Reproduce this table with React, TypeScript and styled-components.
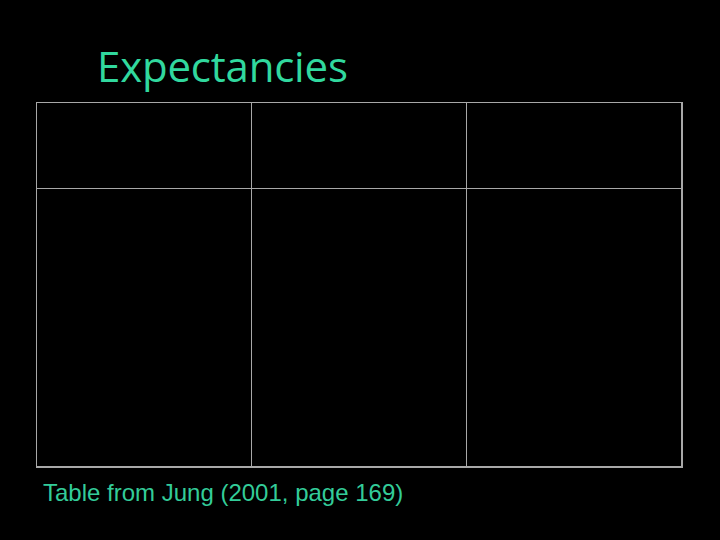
import React from "react";
import styled, { createGlobalStyle } from "styled-components";

const Global = createGlobalStyle`
  html, body { margin: 0; padding: 0; background: #000; }
  #root { width: 720px; height: 540px; }
`;

const Slide = styled.div`
  width: 720px;
  height: 540px;
  background: #000;
  box-sizing: border-box;
  padding: 38px 0 0 36px;
  display: flex;
  flex-direction: column;
  font-family: "Liberation Sans", Arial, sans-serif;
`;

const Title = styled.h1`
  margin: 0 0 0 61px;
  height: 64px;
  font-family: "Open Sans", "DejaVu Sans", sans-serif;
  font-weight: 400;
  font-size: 42px;
  line-height: 56px;
  color: #31d89e;
  letter-spacing: -0.2px;
`;

const Table = styled.div`
  width: 647px;
  height: 366px;
  box-sizing: border-box;
  border-top: 1px solid #a8a8a8;
  border-left: 1px solid #a8a8a8;
  border-right: 2px solid #a8a8a8;
  border-bottom: 2px solid #a8a8a8;
  display: grid;
  grid-template-columns: 215px 215px 1fr;
  grid-template-rows: 86px 1fr;
`;

const Cell = styled.div<{ $col: number; $row: number }>`
  border-right: ${(p) => (p.$col < 2 ? "1px solid #a8a8a8" : "none")};
  border-bottom: ${(p) => (p.$row === 0 ? "1px solid #a8a8a8" : "none")};
`;

const Caption = styled.div`
  margin: 11px 0 0 7px;
  font-size: 24px;
  line-height: 28px;
  color: #33cc99;
`;

export default function App() {
  const cells = [0, 1].flatMap((r) => [0, 1, 2].map((c) => ({ r, c })));
  return (
    <>
      <Global />
      <Slide>
        <Title>Expectancies</Title>
        <Table>
          {cells.map(({ r, c }) => (
            <Cell key={`${r}-${c}`} $row={r} $col={c} />
          ))}
        </Table>
        <Caption>Table from Jung (2001, page 169)</Caption>
      </Slide>
    </>
  );
}
